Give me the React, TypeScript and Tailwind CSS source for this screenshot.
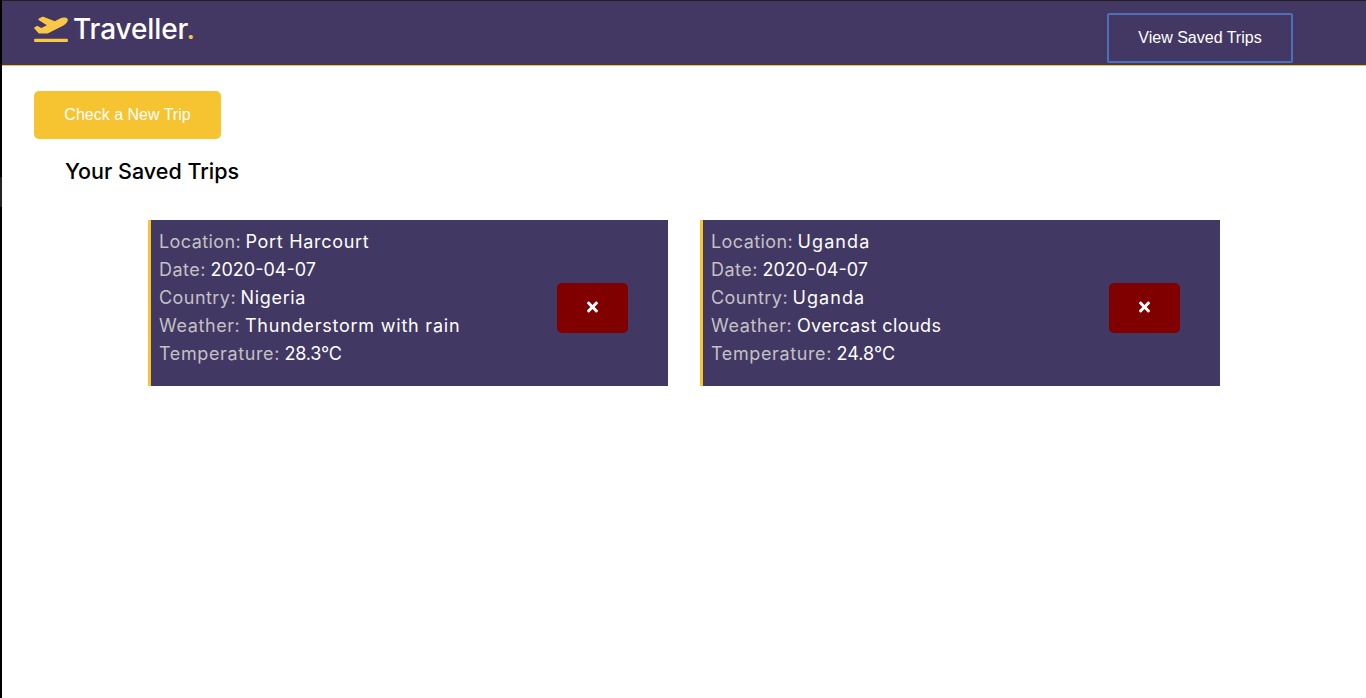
import { FaPlaneDeparture, FaTimes } from "react-icons/fa";

type Field = {
  label: string;
  value: string;
  labelTracking: string;
  valueTracking: string;
};

const trips: Field[][] = [
  [
    { label: "Location:", value: "Port Harcourt", labelTracking: "tracking-[0.4px]", valueTracking: "tracking-[0.7px]" },
    { label: "Date:", value: "2020-04-07", labelTracking: "tracking-[0.5px]", valueTracking: "tracking-[0px]" },
    { label: "Country:", value: "Nigeria", labelTracking: "tracking-[0.45px]", valueTracking: "tracking-[0.65px]" },
    { label: "Weather:", value: "Thunderstorm with rain", labelTracking: "tracking-[0.6px]", valueTracking: "tracking-[0.78px]" },
    { label: "Temperature:", value: "28.3°C", labelTracking: "tracking-[0.62px]", valueTracking: "tracking-[-0.2px]" },
  ],
  [
    { label: "Location:", value: "Uganda", labelTracking: "tracking-[0.4px]", valueTracking: "tracking-[1.1px]" },
    { label: "Date:", value: "2020-04-07", labelTracking: "tracking-[0.5px]", valueTracking: "tracking-[0px]" },
    { label: "Country:", value: "Uganda", labelTracking: "tracking-[0.45px]", valueTracking: "tracking-[1.05px]" },
    { label: "Weather:", value: "Overcast clouds", labelTracking: "tracking-[0.6px]", valueTracking: "tracking-[0.43px]" },
    { label: "Temperature:", value: "24.8°C", labelTracking: "tracking-[0.62px]", valueTracking: "tracking-[0px]" },
  ],
];

function TripCard({ fields }: { fields: Field[] }) {
  return (
    <article className="flex h-[166px] w-[520px] items-start justify-between border-l-[3px] border-[#f7c52f] bg-[#423864] pt-2 pr-10 pl-2">
      <div>
        {fields.map((f) => (
          <p key={f.label} className="flex h-7 items-center gap-[4.5px] text-[18px] leading-7 whitespace-nowrap">
            <span className={`text-[#c4c1c4] ${f.labelTracking}`}>{f.label}</span>
            <span className={`text-white ${f.valueTracking}`}>{f.value}</span>
          </p>
        ))}
      </div>
      <button aria-label="Delete trip" className="mt-[55px] flex h-[50px] w-[71px] items-center justify-center rounded-[5px] bg-[#800000] pb-[2px] text-white">
        <FaTimes className="h-4 w-[11px]" />
      </button>
    </article>
  );
}

export default function App() {
  return (
    <div className="flex h-[698px] w-[1366px] overflow-hidden bg-white font-['Inter',sans-serif]">
      <div className="w-[2px] shrink-0 bg-black pt-[177px]">
        <div className="h-[30px] bg-[#222222]" />
      </div>
      <div className="flex-1">
        <header className="flex h-[66px] items-start justify-between border-t border-b border-t-[#202020] border-b-[#f7c52f] bg-[#433863] pr-[73px] pl-8">
          <div className="flex h-14 items-center">
            <FaPlaneDeparture className="mb-[2px] h-[27px] w-[34px] text-[#f9c846]" />
            <span className="ml-[5px] text-[28px] leading-none font-medium tracking-[-0.1px] text-white">
              Traveller<span className="text-[#f9c846]">.</span>
            </span>
          </div>
          <button className="mt-3 h-[50px] w-[186px] rounded-[2px] border-2 border-[#4c6fb8] font-['Liberation_Sans',sans-serif] text-base text-white">
            View Saved Trips
          </button>
        </header>
        <main className="pt-[25px] pl-8">
          <button className="block h-12 w-[187px] rounded-[5px] bg-[#f6c431] font-['Liberation_Sans',sans-serif] text-base text-white">
            Check a New Trip
          </button>
          <h2 className="mt-[18px] ml-[31px] text-[21.5px] leading-7 font-medium text-black">Your Saved Trips</h2>
          <section className="mt-[35px] ml-[114px] flex gap-8">
            {trips.map((fields, i) => (
              <TripCard key={i} fields={fields} />
            ))}
          </section>
        </main>
      </div>
    </div>
  );
}
